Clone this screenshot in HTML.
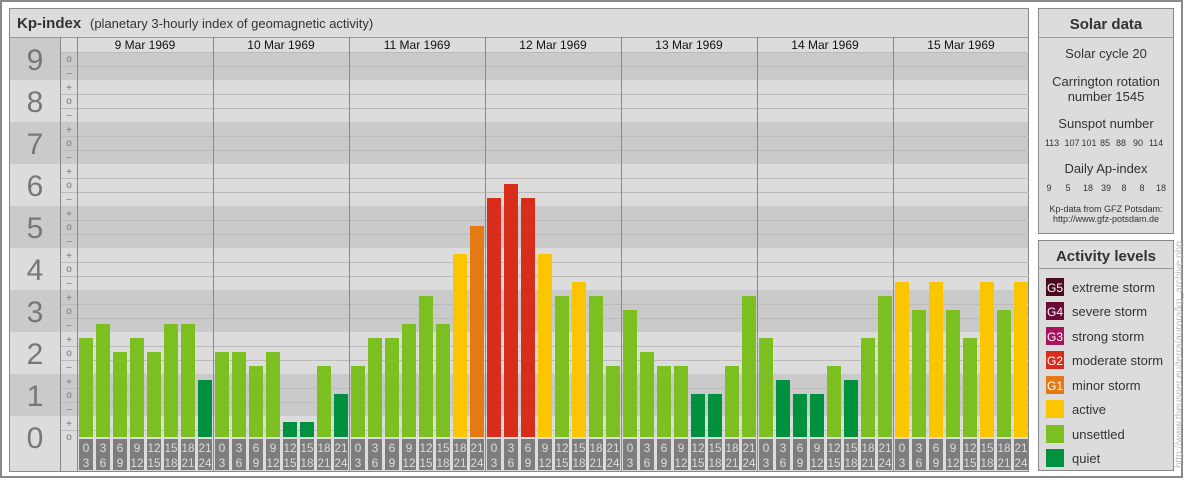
<!DOCTYPE html>
<html><head><meta charset="utf-8"><style>
html,body{margin:0;padding:0;background:#fff}
svg{display:block;font-family:"Liberation Sans",sans-serif}
</style></head><body>
<svg width="1184" height="480" viewBox="0 0 1184 480" xmlns="http://www.w3.org/2000/svg">
<rect x="1" y="1" width="1181" height="476" fill="#fff" stroke="#888" stroke-width="2"/>
<rect x="9.5" y="8.5" width="1019" height="463" fill="#dcdcdc" stroke="#888"/>
<text x="17" y="28" font-size="15" font-weight="bold" fill="#333">Kp-index</text>
<text x="90" y="28" font-size="13" fill="#333">(planetary 3-hourly index of geomagnetic activity)</text>
<line x1="9" y1="37.5" x2="1029" y2="37.5" stroke="#999"/>
<g id="bands">
<rect x="10" y="38" width="1018" height="42" fill="#cacaca"/>
<rect x="10" y="122" width="1018" height="42" fill="#cacaca"/>
<rect x="10" y="206" width="1018" height="42" fill="#cacaca"/>
<rect x="10" y="290" width="1018" height="42" fill="#cacaca"/>
<rect x="10" y="374" width="1018" height="42" fill="#cacaca"/>
</g>
<rect x="61" y="38" width="967" height="14" fill="#dcdcdc"/>
<g stroke="#bbb" stroke-width="1">
<line x1="60" y1="66.5" x2="1029" y2="66.5"/><line x1="60" y1="94.5" x2="1029" y2="94.5"/><line x1="60" y1="108.5" x2="1029" y2="108.5"/>
<line x1="60" y1="136.5" x2="1029" y2="136.5"/><line x1="60" y1="150.5" x2="1029" y2="150.5"/><line x1="60" y1="178.5" x2="1029" y2="178.5"/>
<line x1="60" y1="192.5" x2="1029" y2="192.5"/><line x1="60" y1="220.5" x2="1029" y2="220.5"/><line x1="60" y1="234.5" x2="1029" y2="234.5"/>
<line x1="60" y1="262.5" x2="1029" y2="262.5"/><line x1="60" y1="276.5" x2="1029" y2="276.5"/><line x1="60" y1="304.5" x2="1029" y2="304.5"/>
<line x1="60" y1="318.5" x2="1029" y2="318.5"/><line x1="60" y1="346.5" x2="1029" y2="346.5"/><line x1="60" y1="360.5" x2="1029" y2="360.5"/>
<line x1="60" y1="388.5" x2="1029" y2="388.5"/><line x1="60" y1="402.5" x2="1029" y2="402.5"/><line x1="60" y1="430.5" x2="1029" y2="430.5"/>
<line x1="60" y1="52.5" x2="1029" y2="52.5"/>
</g>
<g font-size="30" fill="#777" text-anchor="middle">
<text x="35" y="70">9</text><text x="35" y="112">8</text><text x="35" y="154">7</text><text x="35" y="196">6</text><text x="35" y="238">5</text>
<text x="35" y="280">4</text><text x="35" y="322">3</text><text x="35" y="364">2</text><text x="35" y="406">1</text><text x="35" y="448">0</text>
</g>
<g font-size="10" fill="#777" text-anchor="middle">
<text x="69" y="62">o</text><text x="69" y="77">−</text>
<text x="69" y="91">+</text><text x="69" y="104">o</text><text x="69" y="119">−</text>
<text x="69" y="133">+</text><text x="69" y="146">o</text><text x="69" y="161">−</text>
<text x="69" y="175">+</text><text x="69" y="188">o</text><text x="69" y="203">−</text>
<text x="69" y="217">+</text><text x="69" y="230">o</text><text x="69" y="245">−</text>
<text x="69" y="259">+</text><text x="69" y="272">o</text><text x="69" y="287">−</text>
<text x="69" y="301">+</text><text x="69" y="314">o</text><text x="69" y="329">−</text>
<text x="69" y="343">+</text><text x="69" y="356">o</text><text x="69" y="371">−</text>
<text x="69" y="385">+</text><text x="69" y="398">o</text><text x="69" y="413">−</text>
<text x="69" y="427">+</text><text x="69" y="440">o</text>
</g>
<g stroke="#888">
<line x1="60.5" y1="37" x2="60.5" y2="471"/><line x1="77.5" y1="37" x2="77.5" y2="471"/>
<line x1="213.5" y1="37" x2="213.5" y2="471"/><line x1="349.5" y1="37" x2="349.5" y2="471"/><line x1="485.5" y1="37" x2="485.5" y2="471"/>
<line x1="621.5" y1="37" x2="621.5" y2="471"/><line x1="757.5" y1="37" x2="757.5" y2="471"/><line x1="893.5" y1="37" x2="893.5" y2="471"/>
</g>
<g font-size="12" fill="#111" text-anchor="middle">
<text x="145" y="49">9 Mar 1969</text><text x="281" y="49">10 Mar 1969</text><text x="417" y="49">11 Mar 1969</text><text x="553" y="49">12 Mar 1969</text>
<text x="689" y="49">13 Mar 1969</text><text x="825" y="49">14 Mar 1969</text><text x="961" y="49">15 Mar 1969</text>
</g>
<g id="bars">
<!-- day1 -->
<rect x="79" y="338" width="14" height="99" fill="#7bbf21"/>
<rect x="96" y="324" width="14" height="113" fill="#7bbf21"/>
<rect x="113" y="352" width="14" height="85" fill="#7bbf21"/>
<rect x="130" y="338" width="14" height="99" fill="#7bbf21"/>
<rect x="147" y="352" width="14" height="85" fill="#7bbf21"/>
<rect x="164" y="324" width="14" height="113" fill="#7bbf21"/>
<rect x="181" y="324" width="14" height="113" fill="#7bbf21"/>
<rect x="198" y="380" width="14" height="57" fill="#00913f"/>
<!-- day2 -->
<rect x="215" y="352" width="14" height="85" fill="#7bbf21"/>
<rect x="232" y="352" width="14" height="85" fill="#7bbf21"/>
<rect x="249" y="366" width="14" height="71" fill="#7bbf21"/>
<rect x="266" y="352" width="14" height="85" fill="#7bbf21"/>
<rect x="283" y="422" width="14" height="15" fill="#00913f"/>
<rect x="300" y="422" width="14" height="15" fill="#00913f"/>
<rect x="317" y="366" width="14" height="71" fill="#7bbf21"/>
<rect x="334" y="394" width="14" height="43" fill="#00913f"/>
<!-- day3 -->
<rect x="351" y="366" width="14" height="71" fill="#7bbf21"/>
<rect x="368" y="338" width="14" height="99" fill="#7bbf21"/>
<rect x="385" y="338" width="14" height="99" fill="#7bbf21"/>
<rect x="402" y="324" width="14" height="113" fill="#7bbf21"/>
<rect x="419" y="296" width="14" height="141" fill="#7bbf21"/>
<rect x="436" y="324" width="14" height="113" fill="#7bbf21"/>
<rect x="453" y="254" width="14" height="183" fill="#fbc600"/>
<rect x="470" y="226" width="14" height="211" fill="#e57a15"/>
<!-- day4 -->
<rect x="487" y="198" width="14" height="239" fill="#d92d1c"/>
<rect x="504" y="184" width="14" height="253" fill="#d92d1c"/>
<rect x="521" y="198" width="14" height="239" fill="#d92d1c"/>
<rect x="538" y="254" width="14" height="183" fill="#fbc600"/>
<rect x="555" y="296" width="14" height="141" fill="#7bbf21"/>
<rect x="572" y="282" width="14" height="155" fill="#fbc600"/>
<rect x="589" y="296" width="14" height="141" fill="#7bbf21"/>
<rect x="606" y="366" width="14" height="71" fill="#7bbf21"/>
<!-- day5 -->
<rect x="623" y="310" width="14" height="127" fill="#7bbf21"/>
<rect x="640" y="352" width="14" height="85" fill="#7bbf21"/>
<rect x="657" y="366" width="14" height="71" fill="#7bbf21"/>
<rect x="674" y="366" width="14" height="71" fill="#7bbf21"/>
<rect x="691" y="394" width="14" height="43" fill="#00913f"/>
<rect x="708" y="394" width="14" height="43" fill="#00913f"/>
<rect x="725" y="366" width="14" height="71" fill="#7bbf21"/>
<rect x="742" y="296" width="14" height="141" fill="#7bbf21"/>
<!-- day6 -->
<rect x="759" y="338" width="14" height="99" fill="#7bbf21"/>
<rect x="776" y="380" width="14" height="57" fill="#00913f"/>
<rect x="793" y="394" width="14" height="43" fill="#00913f"/>
<rect x="810" y="394" width="14" height="43" fill="#00913f"/>
<rect x="827" y="366" width="14" height="71" fill="#7bbf21"/>
<rect x="844" y="380" width="14" height="57" fill="#00913f"/>
<rect x="861" y="338" width="14" height="99" fill="#7bbf21"/>
<rect x="878" y="296" width="14" height="141" fill="#7bbf21"/>
<!-- day7 -->
<rect x="895" y="282" width="14" height="155" fill="#fbc600"/>
<rect x="912" y="310" width="14" height="127" fill="#7bbf21"/>
<rect x="929" y="282" width="14" height="155" fill="#fbc600"/>
<rect x="946" y="310" width="14" height="127" fill="#7bbf21"/>
<rect x="963" y="338" width="14" height="99" fill="#7bbf21"/>
<rect x="980" y="282" width="14" height="155" fill="#fbc600"/>
<rect x="997" y="310" width="14" height="127" fill="#7bbf21"/>
<rect x="1014" y="282" width="14" height="155" fill="#fbc600"/>
</g>
<g id="labels" font-size="12" fill="#ddd" text-anchor="middle">
<g id="d1">
<rect x="79" y="439" width="14" height="31" fill="#7d7d7d"/><rect x="96" y="439" width="14" height="31" fill="#7d7d7d"/>
<rect x="113" y="439" width="14" height="31" fill="#7d7d7d"/><rect x="130" y="439" width="14" height="31" fill="#7d7d7d"/>
<rect x="147" y="439" width="14" height="31" fill="#7d7d7d"/><rect x="164" y="439" width="14" height="31" fill="#7d7d7d"/>
<rect x="181" y="439" width="14" height="31" fill="#7d7d7d"/><rect x="198" y="439" width="14" height="31" fill="#7d7d7d"/>
<text x="86" y="452">0</text><text x="86" y="467">3</text>
<text x="103" y="452">3</text><text x="103" y="467">6</text>
<text x="120" y="452">6</text><text x="120" y="467">9</text>
<text x="137" y="452">9</text><text x="137" y="467" textLength="13" lengthAdjust="spacingAndGlyphs">12</text>
<text x="154" y="452" textLength="13" lengthAdjust="spacingAndGlyphs">12</text><text x="154" y="467" textLength="13" lengthAdjust="spacingAndGlyphs">15</text>
<text x="171" y="452" textLength="13" lengthAdjust="spacingAndGlyphs">15</text><text x="171" y="467" textLength="13" lengthAdjust="spacingAndGlyphs">18</text>
<text x="188" y="452" textLength="13" lengthAdjust="spacingAndGlyphs">18</text><text x="188" y="467" textLength="13" lengthAdjust="spacingAndGlyphs">21</text>
<text x="205" y="452" textLength="13" lengthAdjust="spacingAndGlyphs">21</text><text x="205" y="467" textLength="13" lengthAdjust="spacingAndGlyphs">24</text>
</g>
<use href="#d1" x="136"/><use href="#d1" x="272"/><use href="#d1" x="408"/><use href="#d1" x="544"/><use href="#d1" x="680"/><use href="#d1" x="816"/>
</g>
<!-- Solar data panel -->
<rect x="1038.5" y="8.5" width="135" height="225" fill="#dcdcdc" stroke="#888"/>
<line x1="1038" y1="37.5" x2="1174" y2="37.5" stroke="#999"/>
<g text-anchor="middle" fill="#333">
<text x="1106" y="29" font-size="15" font-weight="bold">Solar data</text>
<text x="1106" y="58" font-size="13">Solar cycle 20</text>
<text x="1106" y="86" font-size="13">Carrington rotation</text>
<text x="1106" y="101" font-size="13">number 1545</text>
<text x="1106" y="128" font-size="13">Sunspot number</text>
<text x="1106" y="173" font-size="13">Daily Ap-index</text>
<g font-size="9">
<text x="1052" y="146">113</text><text x="1072" y="146">107</text><text x="1089" y="146">101</text><text x="1105" y="146">85</text><text x="1121" y="146">88</text><text x="1138" y="146">90</text><text x="1156" y="146">114</text>
<text x="1049" y="191">9</text><text x="1068" y="191">5</text><text x="1088" y="191">18</text><text x="1106" y="191">39</text><text x="1124" y="191">8</text><text x="1142" y="191">8</text><text x="1161" y="191">18</text>
<text x="1106" y="212">Kp-data from GFZ Potsdam:</text>
<text x="1106" y="222">http://www.gfz-potsdam.de</text>
</g>
</g>
<!-- Activity panel -->
<rect x="1038.5" y="240.5" width="135" height="230" fill="#dcdcdc" stroke="#888"/>
<line x1="1038" y1="268.5" x2="1174" y2="268.5" stroke="#999"/>
<text x="1106" y="261" font-size="15" font-weight="bold" fill="#333" text-anchor="middle">Activity levels</text>
<g font-size="13" fill="#333">
<rect x="1046" y="278" width="18" height="18" fill="#4b0a23"/><text x="1055" y="292" fill="#fff" font-size="12" text-anchor="middle">G5</text><text x="1072" y="292">extreme storm</text>
<rect x="1046" y="302" width="18" height="18" fill="#6a0a38"/><text x="1055" y="316" fill="#fff" font-size="12" text-anchor="middle">G4</text><text x="1072" y="316">severe storm</text>
<rect x="1046" y="327" width="18" height="18" fill="#a8135e"/><text x="1055" y="341" fill="#fff" font-size="12" text-anchor="middle">G3</text><text x="1072" y="341">strong storm</text>
<rect x="1046" y="351" width="18" height="18" fill="#d92d1c"/><text x="1055" y="365" fill="#fff" font-size="12" text-anchor="middle">G2</text><text x="1072" y="365">moderate storm</text>
<rect x="1046" y="376" width="18" height="18" fill="#e57a15"/><text x="1055" y="390" fill="#fff" font-size="12" text-anchor="middle">G1</text><text x="1072" y="390">minor storm</text>
<rect x="1046" y="400" width="18" height="18" fill="#fbc600"/><text x="1072" y="414">active</text>
<rect x="1046" y="425" width="18" height="18" fill="#7bbf21"/><text x="1072" y="439">unsettled</text>
<rect x="1046" y="449" width="18" height="18" fill="#00913f"/><text x="1072" y="463">quiet</text>
</g>
<text transform="translate(1182,468) rotate(-90)" font-size="10" fill="#bbb">http://www.theusner.eu/terra/aurora/kp_archive.php</text>
</svg>
</body></html>
